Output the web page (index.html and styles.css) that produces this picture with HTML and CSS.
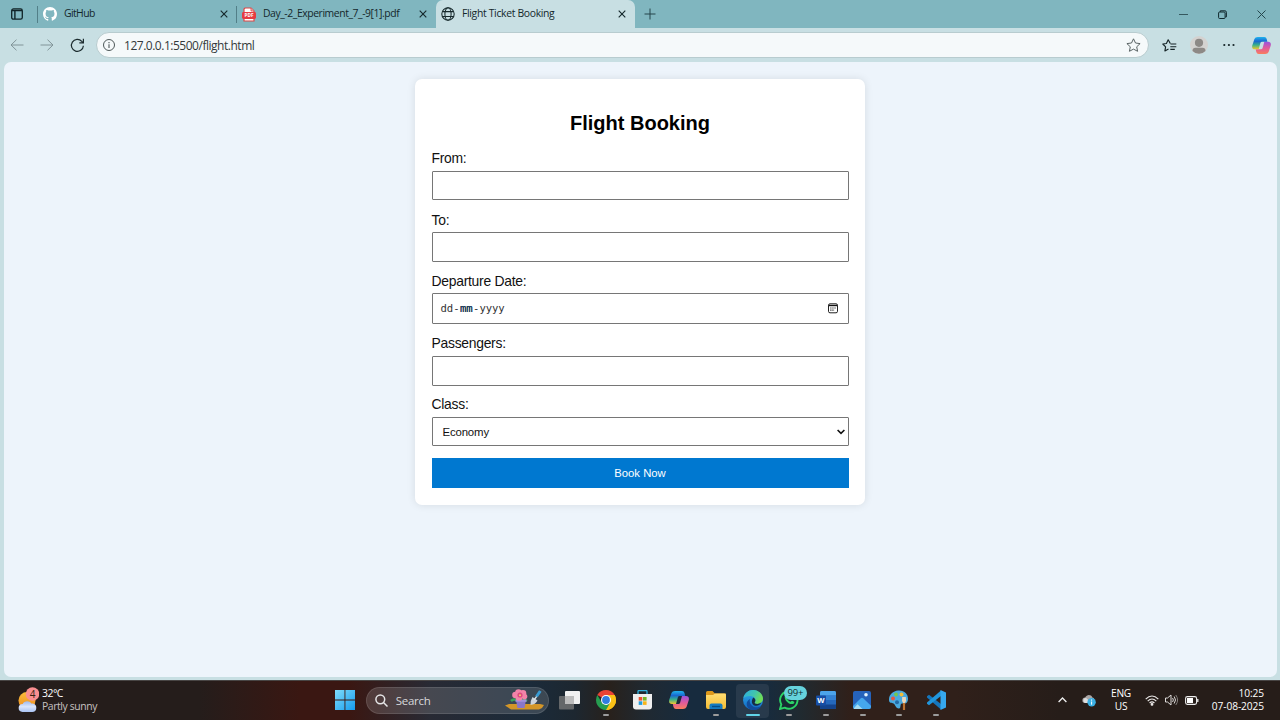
FILE: index.html
```html
<!DOCTYPE html>
<html lang="en">
<head>
<meta charset="utf-8">
<title>Flight Ticket Booking</title>
<link rel="stylesheet" href="styles.css">
</head>
<body>
<svg class="defs" width="0" height="0">
  <defs>
    <linearGradient id="win" x1="0" y1="0" x2="1" y2="1"><stop offset="0" stop-color="#7fdcfb"/><stop offset="1" stop-color="#159bee"/></linearGradient>
    <linearGradient id="cpA" x1="0" y1="0" x2="0" y2="1"><stop offset="0" stop-color="#1fb4ee"/><stop offset=".35" stop-color="#1967cf"/><stop offset=".65" stop-color="#36b18c"/><stop offset="1" stop-color="#f4c72b"/></linearGradient>
    <linearGradient id="cpB" x1="0" y1="0" x2="0" y2="1"><stop offset="0" stop-color="#9a52dd"/><stop offset=".5" stop-color="#df5a9d"/><stop offset="1" stop-color="#fa7d5c"/></linearGradient>
    <linearGradient id="edgeBlue" x1="0" y1="0" x2="0" y2="1"><stop offset="0" stop-color="#2fb2ee"/><stop offset="1" stop-color="#1164c0"/></linearGradient>
    <linearGradient id="edgeGreen" x1="0" y1="0" x2="1" y2=".4"><stop offset="0" stop-color="#2aaee5"/><stop offset=".6" stop-color="#43c5ab"/><stop offset="1" stop-color="#6fdd55"/></linearGradient>
    <linearGradient id="sun" x1="0" y1="0" x2="0" y2="1"><stop offset="0" stop-color="#f9bd3b"/><stop offset="1" stop-color="#ef8c20"/></linearGradient>
    <linearGradient id="cloud" x1="0" y1="0" x2="0" y2="1"><stop offset="0" stop-color="#9db8ee"/><stop offset=".5" stop-color="#dbe6fc"/><stop offset="1" stop-color="#a9c3f3"/></linearGradient>
    <linearGradient id="folder" x1="0" y1="0" x2="0" y2="1"><stop offset="0" stop-color="#ffdd72"/><stop offset="1" stop-color="#f5bd33"/></linearGradient>
    <symbol id="copilot" viewBox="0 0 20 18">
      <path fill="url(#cpB)" d="M14 18H7q-2 0-2.500-2L3.800 13h5.700q1.200 0 1.600-1.200L13 5h4q3.500 0 2.800 4L17.500 16q-.8 2-3.500 2z"/>
      <path fill="url(#cpA)" d="M6 0h7q2 0 2.500 2L16.200 5H10.500Q9.300 5 8.900 6.200L7 13H3Q-.5 13 .2 9L2.500 2Q3.300 0 6 0z"/>
    </symbol>
    <symbol id="close" viewBox="0 0 8 8"><path d="M.7.7l6.600 6.600M7.300.7L.7 7.300" fill="none" stroke="#16292d" stroke-width="1.150"/></symbol>
  </defs>
</svg>

<header class="tabs">
  <div class="tab-actions">
    <svg width="12" height="12" viewBox="0 0 12 12"><rect x=".7" y=".9" width="10.600" height="10.300" rx="1.800" fill="none" stroke="#102327" stroke-width="1.300"/><path d="M1 2.500h10M3.900 3v8" stroke="#102327" stroke-width="1.400"/></svg>
  </div>
  <div class="tab tab-github">
    <svg width="14" height="14" viewBox="0 0 16 16"><path fill="#fff" d="M8 0C3.580 0 0 3.580 0 8c0 3.540 2.290 6.530 5.470 7.590.4.070.55-.17.55-.38 0-.19-.01-.82-.01-1.490-2.010.37-2.530-.49-2.690-.94-.09-.23-.48-.94-.82-1.130-.28-.15-.68-.52-.01-.53.63-.01 1.080.58 1.230.82.72 1.210 1.870.87 2.330.66.070-.52.28-.87.51-1.070-1.780-.2-3.640-.89-3.640-3.950 0-.87.31-1.590.82-2.150-.08-.2-.36-1.020.08-2.120 0 0 .67-.21 2.200.82.64-.18 1.320-.27 2-.27s1.360.09 2 .27c1.530-1.040 2.200-.82 2.200-.82.44 1.100.16 1.920.08 2.120.51.56.82 1.270.82 2.150 0 3.070-1.870 3.750-3.650 3.950.29.25.54.73.54 1.480 0 1.070-.01 1.930-.01 2.200 0 .21.15.46.55.38A8.010 8.010 0 0 0 16 8c0-4.420-3.580-8-8-8z"/></svg>
    <span class="tab-title t-github">GitHub</span>
    <svg class="x" width="8" height="8"><use href="#close"/></svg>
  </div>
  <div class="tab tab-pdf">
    <svg width="14" height="15" viewBox="0 0 14 15"><path d="M3 1h6l3 3v10H2V2z" fill="#fff" stroke="#dd4747" stroke-width="1.200"/><path d="M9 1v3h3" fill="#f7b8b8" stroke="#dd4747" stroke-width=".8"/><rect y="5" width="14" height="7" rx="1.400" fill="#e63c42"/><text x="7" y="10.300" text-anchor="middle" class="pdf-text">PDF</text></svg>
    <span class="tab-title t-pdf">Day_-2_Experiment_7_-9[1].pdf</span>
    <svg class="x" width="8" height="8"><use href="#close"/></svg>
  </div>
  <div class="tab tab-active">
    <svg width="14" height="14" viewBox="0 0 14 14" fill="none" stroke="#17292c" stroke-width="1.050"><circle cx="7" cy="7" r="6.200"/><ellipse cx="7" cy="7" rx="3.100" ry="6.200"/><path d="M1.400 4.600h11.200M1.400 9.400h11.200"/></svg>
    <span class="tab-title t-flight">Flight Ticket Booking</span>
    <svg class="x" width="8" height="8"><use href="#close"/></svg>
  </div>
  <svg class="new-tab" width="12" height="12"><path d="M6 .5v11M.5 6h11" stroke="#24454b"/></svg>
  <div class="window-buttons">
    <svg width="9" height="9"><path d="M0 4.500h9" stroke="#35585e"/></svg>
    <svg width="9" height="9" fill="none" stroke="#10292e"><rect x=".6" y="2" width="6.500" height="6.500" rx="1"/><path d="M2.300 1.900V.8h4.600q1.500 0 1.500 1.500v4.600H7.300"/></svg>
    <svg width="9" height="9"><path d="M.5.5l8 8M8.500.5l-8 8" stroke="#24464c"/></svg>
  </div>
</header>

<nav class="toolbar">
  <svg class="back" width="14" height="12" fill="none" stroke="#819498"><path d="M13.500 6H1M6.500.7L1 6l5.500 5.300"/></svg>
  <svg class="forward" width="14" height="12" fill="none" stroke="#819498"><path d="M.5 6H13M7.500.7L13 6l-5.500 5.300"/></svg>
  <svg class="reload" width="15" height="15" fill="none" stroke="#1c2b2e" stroke-width="1.200"><path d="M13.400 7.800A6 6 0 1 1 11.800 3.300L13.300 4.800M13.400.8v4.100H9.300"/></svg>
  <div class="address">
    <svg width="12" height="12" fill="none" stroke="#4d5758"><circle cx="6" cy="6" r="5.500"/><path d="M6 5.200V9M6 3v1.200" stroke-width="1.100"/></svg>
    <span class="url">127.0.0.1:5500/flight.html</span>
    <svg class="star" width="15" height="14" viewBox="0 0 15 14"><path d="M7.500.8l2 4.200 4.600.6-3.400 3.200.9 4.500-4.100-2.200-4.100 2.200.9-4.500L.9 5.600 5.500 5z" fill="none" stroke="#596364" stroke-linejoin="round"/></svg>
  </div>
  <svg class="favs" width="15" height="13" fill="none" stroke="#142326" stroke-width="1.150"><path d="M8.300 4.500L6.200.8l-1.800 3.700-3.600.5 2.800 2.800-.7 4.100 3.600-1.900M8.500 5h5.800M8.300 7.700h6M8.300 10.400h4.500" stroke-linejoin="round"/></svg>
  <svg class="profile" width="18" height="18"><circle cx="9" cy="9" r="9" fill="#d4d2d0"/><circle cx="9" cy="6.800" r="4.100" fill="#8d8986"/><path d="M2.500 15q0-3.200 3-3.200h7q3 0 3 3.200A9 9 0 0 1 2.500 15" fill="#8d8986"/></svg>
  <svg class="more" width="12" height="4" fill="#172528"><circle cx="1.300" cy="2" r="1.100"/><circle cx="5.900" cy="2" r="1.100"/><circle cx="10.500" cy="2" r="1.100"/></svg>
  <svg class="copilot-btn" width="19" height="17"><use href="#copilot"/></svg>
</nav>

<main class="page">
  <form class="card">
    <h2>Flight Booking</h2>
    <label for="from">From:</label>
    <input class="field" id="from" type="text">
    <label class="label-to" for="to">To:</label>
    <input class="field field-to" id="to" type="text">
    <label class="label-date">Departure Date:</label>
    <div class="field date">
      <span class="mono">dd<i>-</i><b>mm</b><i>-</i>yyyy</span>
      <svg width="10" height="11" viewBox="0 0 10 11"><rect x=".5" y=".8" width="9" height="9" rx="1.500" fill="none" stroke="#222"/><path d="M.5 2.500h9" stroke="#111" stroke-width="1.400"/><path d="M2.200 5h6M2.200 7.100h4.300" stroke="#333" stroke-width="1.200" stroke-dasharray="1.300 .8"/></svg>
    </div>
    <label for="passengers">Passengers:</label>
    <input class="field field-pass" id="passengers" type="text">
    <label>Class:</label>
    <div class="field select"><span>Economy</span><svg width="8" height="6"><path d="M.6 1L4 4.400 7.400 1" fill="none" stroke="#111" stroke-width="1.600"/></svg></div>
    <button type="button">Book Now</button>
  </form>
</main>

<footer class="taskbar">
  <div class="weather">
    <svg width="21" height="27" viewBox="0 0 21 27"><circle cx="9" cy="13.500" r="8.500" fill="url(#sun)"/><path d="M4.500 25a4 4 0 0 1 .3-8c1-3.200 6.700-4 8.500-.5 3.700-.3 5.200 2 5 4.500 0 2.500-1.600 4-4 4z" fill="url(#cloud)"/><circle cx="14.500" cy="7" r="6.800" fill="#fa8f91"/><text x="14.500" y="10.600" text-anchor="middle" class="badge-number">4</text></svg>
    <div class="weather-text"><span class="temp">32°C</span><span class="cond">Partly sunny</span></div>
  </div>
  <div class="app"><svg width="20" height="20"><path d="M0 0h9.500v9.500H0zM10.400 0H20v9.500h-9.600zM0 10.400h9.500V20H0zM10.400 10.400H20V20h-9.600z" fill="url(#win)"/></svg></div>
  <div class="search">
    <svg width="13" height="13" fill="none" stroke="#e6e6e7" stroke-width="1.500"><circle cx="5.300" cy="5.300" r="4.400"/><path d="M8.500 8.500l4 4"/></svg>
    <span>Search</span>
    <svg class="flower" width="40" height="22" viewBox="0 0 40 22">
      <path d="M0 16.500l4-1.500 31 0 4 1-2 3-3 1.500H6z" fill="#d39628"/>
      <path d="M6 12q3-3 8 0M22 12q-5-3-8 1" stroke="#3ba45b" stroke-width="2.600" fill="none"/>
      <path d="M11 11h10l-1.500 8h-7z" fill="#8977c9"/><path d="M10.500 10.500h11v2.300h-11z" fill="#a18fdd"/>
      <g fill="#f283a8"><circle cx="10.500" cy="6" r="3.300"/><circle cx="13.500" cy="3.600" r="3.300"/><circle cx="18" cy="4.200" r="3.300"/><circle cx="19.500" cy="7.600" r="2.800"/><circle cx="14" cy="8.300" r="3.500"/></g><circle cx="15" cy="6" r="2.600" fill="#dc4c80"/><circle cx="15" cy="6.200" r="1" fill="#f8d16b"/>
      <path d="M27.500 8l5 3.500q-2 4-7 4.500-.5-4 2-8" fill="#cbd4dc"/><path d="M29 11l3-4" stroke="#dbe4e8" stroke-width="1.300"/><path d="M31.500 7.500L35.300 2" stroke="#399bd3" stroke-width="3"/>
    </svg>
  </div>
  <div class="app"><svg width="21" height="19"><rect x="6" width="15" height="13" rx="1" fill="#f1f1f1"/><rect y="5" width="15" height="13.500" rx="1" fill="#777" opacity=".8"/><rect x="6" y="5" width="9" height="8" fill="#bcbcbc"/></svg></div>
  <div class="app running"><svg width="20" height="20" viewBox="0 0 20 20"><path d="M10 10L1.340 5A10 10 0 0 1 18.660 5z" fill="#e84335"/><path d="M10 10l8.660-5A10 10 0 0 1 10 20z" fill="#fbc116"/><path d="M10 5h8.660A10 10 0 0 1 10 20l4.330-7.500z" fill="#fbc116"/><path d="M1.340 5A10 10 0 0 0 10 20l4.330-7.500L10 15l-4.330-2.500z" fill="#269d50"/><circle cx="10" cy="10" r="5" fill="#fff"/><circle cx="10" cy="10" r="3.900" fill="#307de1"/></svg></div>
  <div class="app"><svg width="19" height="20"><path d="M5 5V1.500q0-1 1-1h7q1 0 1 1V5" fill="none" stroke="#32b1dc" stroke-width="1.300"/><path d="M0 4h19v12.500q0 3-3 3H3q-3 0-3-3z" fill="#efefef"/><path d="M5.700 7h3.600v3.600H5.700z" fill="#ec5131"/><path d="M10 7h3.600v3.600H10z" fill="#74b725"/><path d="M5.700 11.300h3.600v3.600H5.700z" fill="#219ddd"/><path d="M10 11.300h3.600v3.600H10z" fill="#f8b51a"/></svg></div>
  <div class="app"><svg width="20" height="18"><use href="#copilot"/></svg></div>
  <div class="app running"><svg width="20" height="18"><path d="M0 6V1.500Q0 0 1.500 0h5L9 2.500H20V6z" fill="#dd981b"/><path d="M0 4h7l2-1.500h9.500Q20 2.500 20 4v12q0 2-2 2H2q-2 0-2-2z" fill="url(#folder)"/><path d="M3.500 18v-3.500q0-2 2-2h9q2 0 2 2V18z" fill="#147bc1"/><path d="M6 15.500h8" stroke="#064d85" stroke-width="1.400"/></svg></div>
  <div class="app running current"><svg width="20" height="20" viewBox="0 0 20 20"><circle cx="10" cy="10" r="10" fill="url(#edgeBlue)"/><path d="M.3 8.500C1.400 3 5.500 0 10 0c6 0 10 4.500 10 8.500 0 3.500-2.700 5.400-5.700 5.400-2.200 0-3.200-.9-2.500-1.700 1.400-1.800.7-5.200-3-6C5.300 5.500 1.300 6.600.3 8.500z" fill="url(#edgeGreen)"/><path d="M7 9c-1.500 5 3 9 8 8.200 1.300-.2 2.400-.9 3-.7-2.500 3.300-7 4.300-10.500 3C2.500 17.500 2.500 11 7 9z" fill="#124d9c"/><path d="M10.200 7.400c2.500 1.300 2.700 3.200 1.600 4.800-.7.800.3 1.700 2.500 1.700 1.400 0 3-.4 4-1.300-.8 2-2.700 3.200-5 3.200-3.400 0-6.200-3.500-3.100-8.400z" fill="#172d42"/></svg></div>
  <div class="app running whatsapp"><svg width="20" height="20" viewBox="0 0 20 20"><path d="M1 19l1.300-4.600A8.700 8.700 0 1 1 5.700 17.700z" fill="#172b33" stroke="#2bd366" stroke-width="1.900"/><path d="M6.500 5.200c-3 3 3.200 10.500 8 8.600.9-.4 1.100-1.600.6-2l-2-1c-.6-.3-1 .8-1.600 1-1.500-.4-3-2-3.500-3.300l.8-1.200-.8-2c-.3-.6-1.100-.5-1.500-.1z" fill="#2bd366"/></svg><span class="count">99+</span></div>
  <div class="app running"><svg width="20" height="18"><rect x="4" width="16" height="18" rx="1.500" fill="#2568bc"/><path d="M4 4.500V1.500Q4 0 5.500 0h13Q20 0 20 1.500v3z" fill="#4ca4eb"/><path d="M4 4.500h16V9H4z" fill="#3482d4"/><path d="M4 13.500h16v3q0 1.500-1.500 1.500h-13Q4 18 4 16.500z" fill="#14438c"/><rect y="4.500" width="10" height="10" rx="1" fill="#174ea5"/><text x="5" y="12.300" text-anchor="middle" class="word-letter">W</text></svg></div>
  <div class="app running"><svg width="18" height="18"><rect width="18" height="18" rx="2" fill="#2663bb"/><path d="M0 15L7.800 7.200q1.200-1 2.400 0L18 14.800V16q0 2-2 2H2q-2 0-2-2z" fill="#45a7ed"/><path d="M.6 17.400L4.500 13.300l5 4.700H2Q1.200 18 .6 17.400z" fill="#a3dcf5"/><circle cx="13" cy="3.700" r="1.800" fill="#e4f4fd"/></svg></div>
  <div class="app running"><svg width="20" height="20" viewBox="0 0 20 20"><path d="M9 .5c7-.7 11 4.500 9.800 10-.8 4-3.800 3-5.800 3-2.500.3-.5 4.700-3 5-3.200.3-3.700-4.200-5.500-5C2.500 12.500-.3 13.500 0 9 .3 4.500 4 1 9 .5z" fill="#49a9df"/><circle cx="4" cy="8.500" r="2" fill="#e95640"/><circle cx="7" cy="4.500" r="1.900" fill="#75c74c"/><circle cx="12.500" cy="4.500" r="2" fill="#f2bd38"/><circle cx="8" cy="12.300" r="2" fill="#2469a5"/><path d="M15 9v11" stroke="#bd7330" stroke-width="2.200"/><path d="M13.200 7h3.600l.3 4-1.200 2h-1.800L13 11z" fill="#e9d8bc"/></svg></div>
  <div class="app running"><svg width="20" height="20" viewBox="0 0 20 20"><path d="M1 6.200L3 4.800 15 14v5.500L1 7.500z" fill="#1576bc"/><path d="M1 13.800l2 1.400L15 6V.5L1 12.500z" fill="#2196dc"/><path d="M14.500 0L20 2.400v15.200L14.500 20z" fill="#36a8ef"/></svg></div>
  <div class="tray">
    <div class="cell w28"><svg width="9" height="6"><path d="M.6 5l3.900-4 3.900 4" fill="none" stroke="#eee" stroke-width="1.300"/></svg></div>
    <div class="cell w26"><svg width="14" height="13"><path d="M3 9a2.700 2.700 0 0 1 .2-5.400C4.700.3 9 .2 10.400 3.400 13 3.600 13.200 8 10.500 9z" fill="#aaa7a6"/><path d="M3 9a2.700 2.700 0 0 1 0-5q3 0 4.500 5z" fill="#dedede"/><circle cx="9.600" cy="8.300" r="4.200" fill="#3bb0e4"/><path d="M9.600 7.500v3.200M9.600 5.500v1.200" stroke="#fff"/></svg></div>
    <div class="cell lang"><span>ENG</span><span>US</span></div>
    <div class="cell w24"><svg width="14" height="11" fill="none" stroke="#e9e7e6" stroke-width="1.200"><path d="M.7 4.200Q7-2.200 13.300 4.200M2.700 6.200q4.300-4.400 8.600 0M4.600 8q2.400-2.400 4.800 0"/><circle cx="7" cy="9.400" r=".8" fill="#eee"/></svg></div>
    <div class="cell w15"><svg width="13" height="12" fill="none" stroke="#dedcdb"><path d="M.5 4h2L6 1v10L2.500 8h-2zM7.600 4q1.500 2 0 4M9.200 2.500q2.600 3.500 0 7"/><path d="M10.800 1q3.600 5 0 10" stroke="#827e7c"/></svg></div>
    <div class="cell w26"><svg width="14" height="9"><rect x=".6" y=".6" width="11" height="7.800" rx="1.800" fill="none" stroke="#eee" stroke-width="1.100"/><rect x="2" y="2" width="6" height="5" fill="#fff"/><path d="M12.800 3v3" stroke="#eee" stroke-width="1.300"/></svg></div>
    <div class="clock"><span class="time">10:25</span><span class="day">07-08-2025</span></div>
  </div>
</footer>
</body>
</html>
```
FILE: styles.css
```css
* { box-sizing: border-box; }
body {
  margin: 0;
  width: 1280px;
  height: 720px;
  overflow: hidden;
  display: flex;
  flex-direction: column;
  background: #c8dfe3;
  font-family: "Open Sans", "Noto Sans", sans-serif;
}
svg { display: block; flex: none; }
.defs { position: absolute; }

/* Tab strip */
.tabs { height: 28px; flex: none; display: flex; align-items: center; background: #80b6bf; }
.tab-actions { width: 38px; height: 17px; padding: 2px 0 0 11px; border-right: 1px solid #527f88; }
.tab { height: 28px; display: flex; align-items: center; color: #14272b; font-size: 10.4px; white-space: nowrap; }
.tab-title { margin-left: 7px; padding-bottom: 2px; }
.x { margin-left: auto; }
.tab-github { width: 199px; height: 17px; padding: 0 8px 0 5px; border-right: 1px solid #527f88; }
.tab-pdf { width: 199px; padding: 0 9px 0 5px; }
.tab-active { width: 199px; padding: 0 9px 0 5px; background: #c8dfe3; border-radius: 7px 7px 0 0; }
.t-github { letter-spacing: -0.6px; }
.t-pdf { letter-spacing: -0.43px; }
.t-flight { letter-spacing: -0.33px; }
.pdf-text { font: bold 4.6px "Open Sans", sans-serif; fill: #fff; }
.new-tab { margin-left: 9px; }
.window-buttons { display: flex; gap: 30px; margin-left: auto; margin-right: 14px; }

/* Navigation bar */
.toolbar { height: 34px; flex: none; display: flex; align-items: center; padding-left: 10px; }
.forward { margin-left: 16px; }
.reload { margin-left: 15.500px; }
.address {
  width: 1053px; height: 26px; margin-left: 11.500px; padding: 0 7px 0 6px;
  display: flex; align-items: center;
  background: #f5f9fa; border: 1px solid #b8cccf; border-radius: 13px;
}
.url { margin-left: 9px; font-size: 12px; letter-spacing: -0.48px; color: #34393a; }
.star { margin-left: auto; }
.favs { margin-left: 13px; }
.profile { margin-left: 13px; }
.more { margin-left: 15px; }
.copilot-btn { margin-left: 17px; }

/* Web page */
.page {
  height: 615px; flex: none; margin: 0 3px 3px 4px; padding: 17px 1px 0 0;
  background: #edf4fb; border-radius: 7px;
  font-family: "Liberation Sans", Arial, sans-serif;
}
.card {
  width: 450px; height: 426px; margin: 0 auto; padding: 33px 16.500px 17px;
  display: flex; flex-direction: column;
  background: #fff; border-radius: 7px; box-shadow: 0 0 8px rgba(0, 0, 0, 0.1);
}
h2 { margin: 0 0 16px; font-size: 20px; line-height: 23px; text-align: center; color: #000; }
label { height: 15px; margin-bottom: 5px; font-size: 13.900px; line-height: 15px; letter-spacing: -0.27px; color: #111; }
.label-to, .label-date { line-height: 17px; }
.field {
  height: 29px; flex: none; margin: 0 0 12px; padding: 0 8px;
  display: flex; align-items: center; justify-content: space-between;
  background: #fff; border: 1px solid #767676; border-radius: 1px;
  font-size: 11.111px; color: #111;
}
.field-to { height: 30px; margin-bottom: 11px; }
.date { height: 31px; margin-bottom: 12px; padding-right: 10px; }
.field-pass { height: 30px; margin-bottom: 11px; }
.mono { padding-bottom: 1px; font: 10.600px "DejaVu Sans Mono", monospace; letter-spacing: -0.2px; color: #333; }
.mono i { font-style: normal; padding: 0 0.500px; }
.mono b { font-weight: normal; color: #1d3a58; text-shadow: 0 0 0.500px #1d3a58; }
.select { padding: 0 3px 0 10px; font-size: 11.400px; letter-spacing: -0.15px; }
button {
  height: 30px; flex: none; border: 0; background: #0078d0; color: #fff;
  font: 11.300px "Liberation Sans", Arial, sans-serif;
}

/* Taskbar */
.taskbar {
  height: 40px; flex: none; display: flex; align-items: center; color: #fff;
  border-top: 1px solid #484544;
  background: linear-gradient(90deg, #251d1b 0, #251d1b 200px, #3a1712 300px, #3a1712 350px, #282a34 430px, #1b2b3a 530px, #1d2730 575px, #28211c 610px, #202931 645px, #172b3e 690px, #172b3e 765px, #202a30 800px, #30201a 850px, #30201a 955px, #261d19 1060px, #261d19 100%);
}
.weather { width: 326.700px; padding: 0 0 1px 18px; display: flex; align-items: center; }
.weather-text { margin-left: 3px; display: flex; flex-direction: column; font-size: 10.400px; line-height: 13.500px; white-space: nowrap; }
.temp { letter-spacing: -0.5px; }
.cond { letter-spacing: -0.4px; color: #c5c1c0; }
.badge-number { font: 10px "Open Sans", sans-serif; fill: #321; }
.app { width: 36.600px; height: 38px; flex: none; padding-bottom: 1px; display: flex; align-items: center; justify-content: center; position: relative; }
.running::after { content: ""; position: absolute; bottom: 4px; left: 15.500px; width: 6px; height: 2px; border-radius: 1px; background: #9c9c9c; }
.current::before { content: ""; position: absolute; inset: 2px 1.500px; border-radius: 4px; background: #ffffff13; }
.current svg { position: relative; }
.current::after { left: 11.500px; width: 14px; background: #61d4e9; }
.count {
  position: absolute; left: 13px; top: 4px; width: 23px; height: 14px; border-radius: 7px;
  background: #65d2dc; color: #132a2e; font-size: 9.500px; line-height: 13px; letter-spacing: -0.2px; text-align: center;
}
.word-letter { font: bold 7.500px "Open Sans", sans-serif; fill: #fff; }
.search {
  width: 183px; height: 27px; flex: none; margin: 0 2.500px 1px; padding: 0 3px 0 8px;
  display: flex; align-items: center;
  background: #ffffff24; border: 1px solid #ffffff1c; border-radius: 14px;
}
.search span { margin-left: 8px; font-size: 11.500px; letter-spacing: -0.3px; color: #d7d8db; }
.flower { margin-left: auto; }
.tray { width: 216px; margin: 0 16px 1px auto; display: flex; align-items: center; font-size: 10.200px; line-height: 13.500px; }
.cell { flex: none; display: flex; align-items: center; justify-content: center; }
.w28 { width: 28px; }
.w26 { width: 26px; }
.w24 { width: 24px; }
.w15 { width: 15px; }
.lang { width: 38px; flex-direction: column; letter-spacing: -0.3px; }
.clock { flex: 1; display: flex; flex-direction: column; align-items: flex-end; white-space: nowrap; letter-spacing: -0.1px; }
```
